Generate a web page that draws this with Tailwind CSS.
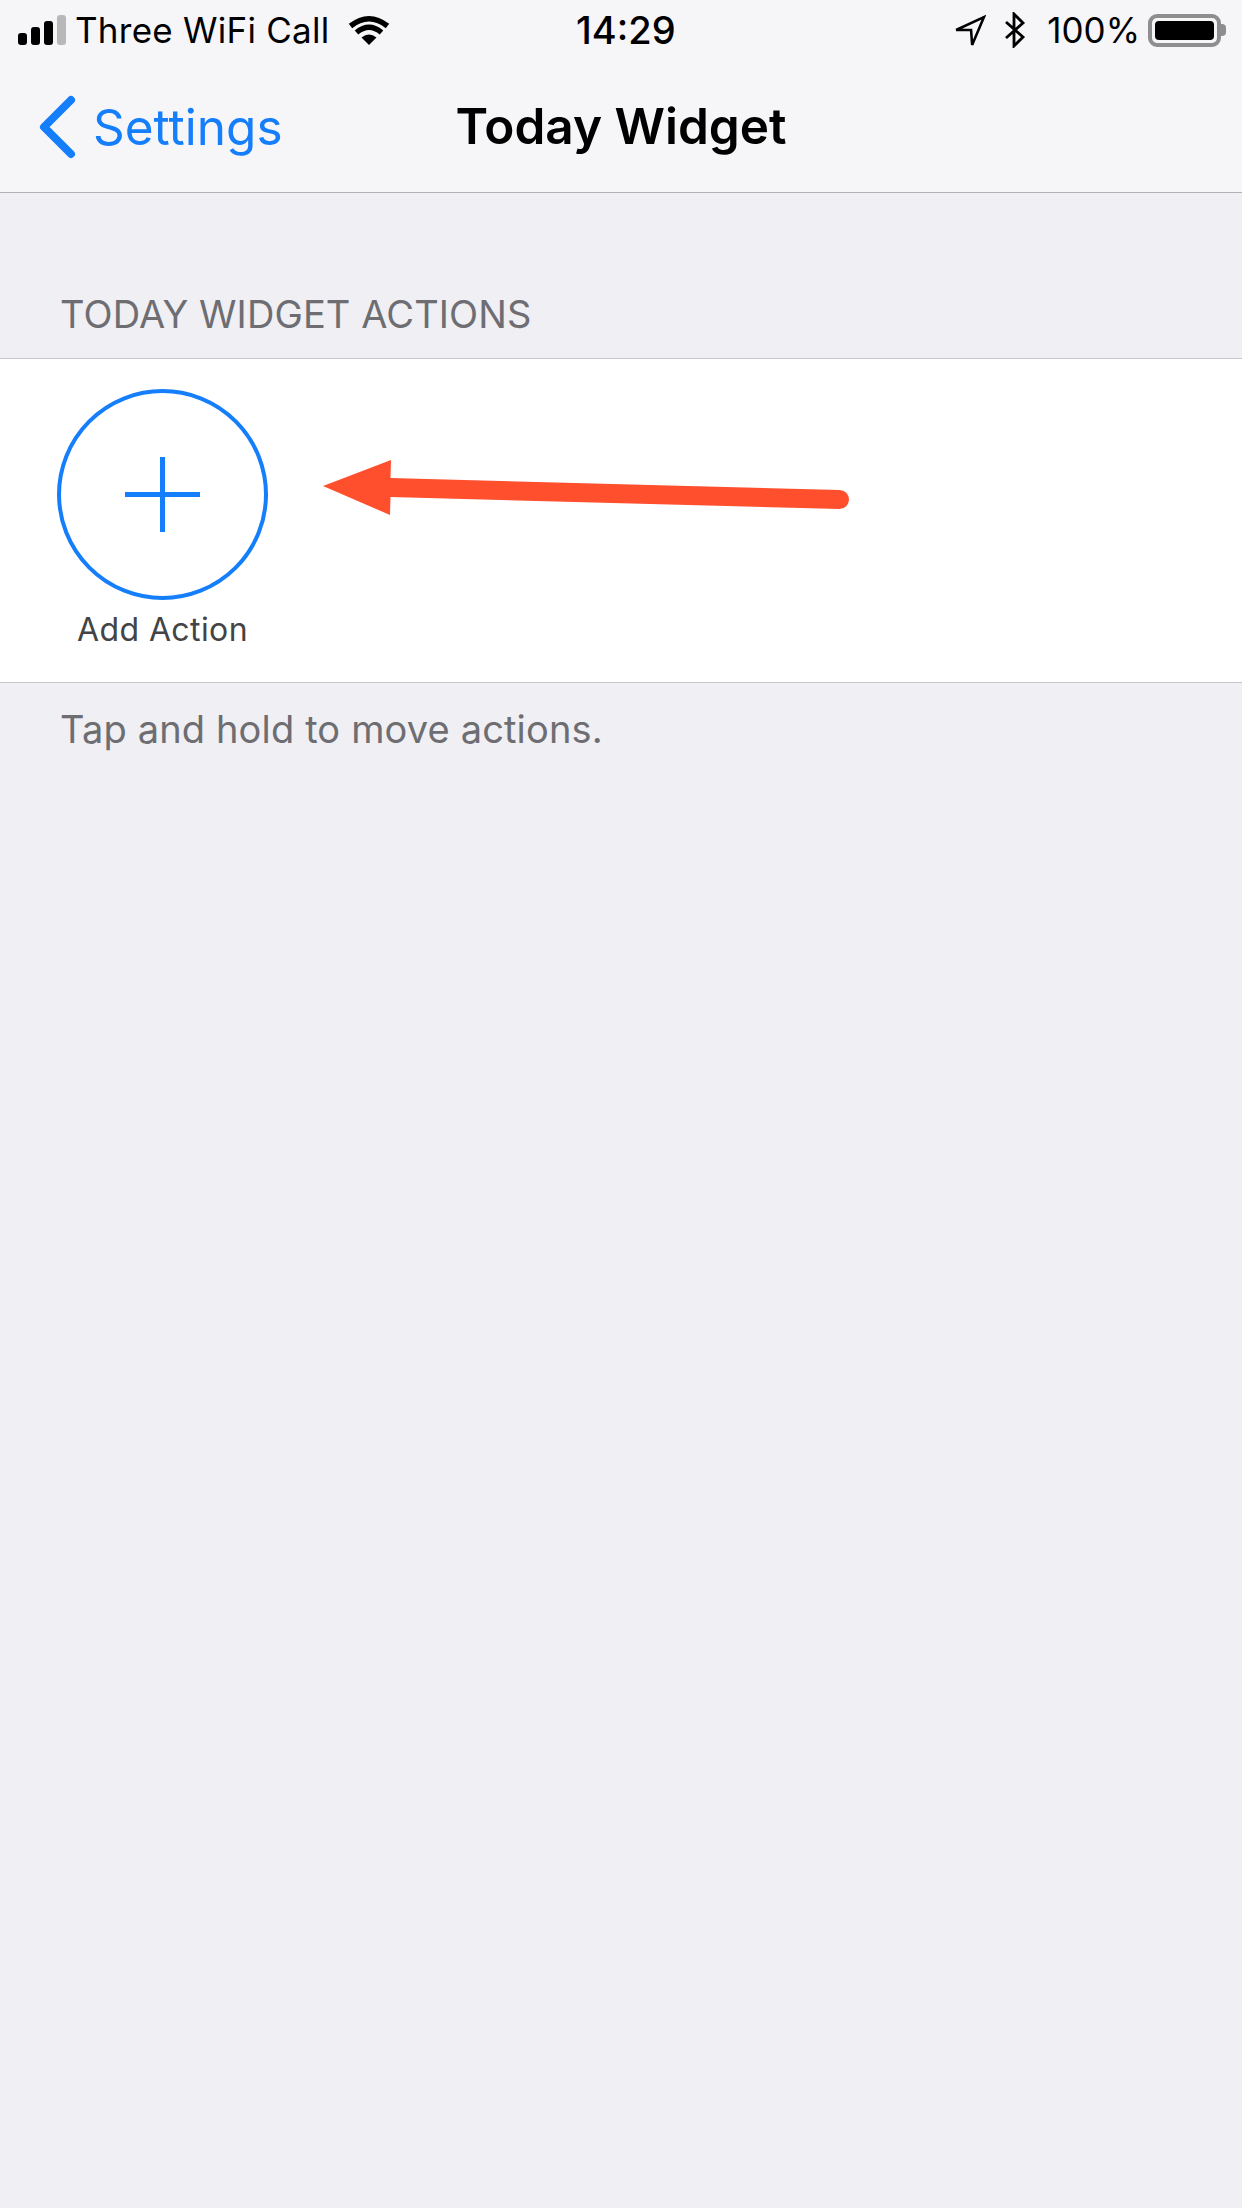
<!DOCTYPE html>
<html>
<head>
<meta charset="utf-8">
<script src="https://cdn.jsdelivr.net/npm/@tailwindcss/browser@4"></script>
</head>
<body class="m-0">
<div class="relative w-[1242px] h-[2208px] bg-[#efeff4] overflow-hidden font-['Inter',sans-serif]">
  <header class="h-[193px] bg-[#f6f6f9] border-b border-[#b2b2b2] flex flex-col">
    <div class="h-[60px] relative flex items-center justify-between pl-[18px] pr-[16px] text-black">
      <div class="flex items-center">
        <svg width="48" height="30" viewBox="0 0 48 30" class="mr-[9px]">
          <rect x="0" y="18" width="9" height="12" rx="3" fill="#000"/>
          <rect x="13" y="12" width="9" height="18" rx="3" fill="#000"/>
          <rect x="26" y="6" width="9" height="24" rx="3" fill="#000"/>
          <rect x="39" y="0" width="9" height="30" rx="3" fill="#b8b8b8"/>
        </svg>
        <span class="text-[35px] leading-[44px] tracking-[0.25px]">Three WiFi Call</span>
        <svg width="44" height="30" viewBox="0 0 42 30" class="ml-[18px]">
          <path d="M21 30 L13.5 22.5 Q21 16.5 28.5 22.5 Z" fill="#000"/>
          <path d="M2.5 11 Q21 -3.5 39.5 11" fill="none" stroke="#000" stroke-width="5.5"/>
          <path d="M8.5 17.5 Q21 7 33.5 17.5" fill="none" stroke="#000" stroke-width="5.5"/>
        </svg>
      </div>
      <div class="absolute left-[576px] top-[8px] text-[38px] leading-[44px] font-medium">14:29</div>
      <div class="flex items-center">
        <svg width="32" height="32" viewBox="0 0 30 30" class="mr-[18px]">
          <path d="M2 15 L28 3 L17 29 L16 15 Z" fill="none" stroke="#000" stroke-width="2.4" stroke-linejoin="miter"/>
        </svg>
        <svg width="22" height="36" viewBox="0 0 22 36" class="mr-[21px]">
          <path d="M2 10 L19 25 L10 34 V2 L19 11 L2 26" fill="none" stroke="#000" stroke-width="2.8"/>
        </svg>
        <span class="text-[35px] leading-[44px] mr-[8px]">100%</span>
        <div class="w-[73px] h-[33px] rounded-[9px] border-[4px] border-[#8e8e8e] p-[3px]">
          <div class="w-full h-full bg-black rounded-[4px]"></div>
        </div>
        <div class="w-[5px] h-[12px] bg-[#8e8e8e] rounded-r-[4px]"></div>
      </div>
    </div>
    <div class="flex-1 relative flex items-center justify-center">
      <div class="absolute left-[38px] top-[35px] flex items-center text-[#157efb]">
        <svg width="38" height="64" viewBox="0 0 38 64">
          <path d="M33 5 L6 32 L33 59" fill="none" stroke="#157efb" stroke-width="8" stroke-linecap="round" stroke-linejoin="round"/>
        </svg>
        <span class="ml-[17px] text-[49.5px] leading-[60px]">Settings</span>
      </div>
      <h1 class="text-[49.5px] leading-[60px] font-semibold text-black">Today Widget</h1>
    </div>
  </header>

  <div class="h-[165px] flex items-end pl-[60px] pb-[21px]">
    <span class="text-[38px] leading-[46px] text-[#6d6d72] tracking-[0.1px]">TODAY WIDGET ACTIONS</span>
  </div>

  <section class="h-[325px] bg-white border-y border-[#c8c7cc] pt-[30px] pl-[57px] box-border">
    <div class="w-[211px] flex flex-col items-center">
      <div class="w-[211px] h-[211px] rounded-full border-[4.5px] border-[#157efb] relative flex items-center justify-center">
        <div class="w-[75px] h-[4.5px] bg-[#157efb]"></div>
        <div class="absolute w-[4.5px] h-[75px] bg-[#157efb]"></div>
      </div>
      <span class="mt-[10px] text-[32px] leading-[40px] text-[#444] whitespace-nowrap tracking-[0.4px]">Add Action</span>
    </div>
  </section>

  <p class="pl-[60px] pt-[23px] text-[38px] leading-[46px] text-[#6d6d72] tracking-[0.15px]">Tap and hold to move actions.</p>

  <svg class="absolute left-0 top-0" width="1242" height="800" viewBox="0 0 1242 800">
    <path d="M323 486 L391 460 L390.5 478 L839.5 490 A9.5 9.5 0 0 1 839.5 509 L390.5 497 L390 515 Z" fill="#ff4f2c"/>
  </svg>
</div>
</body>
</html>
